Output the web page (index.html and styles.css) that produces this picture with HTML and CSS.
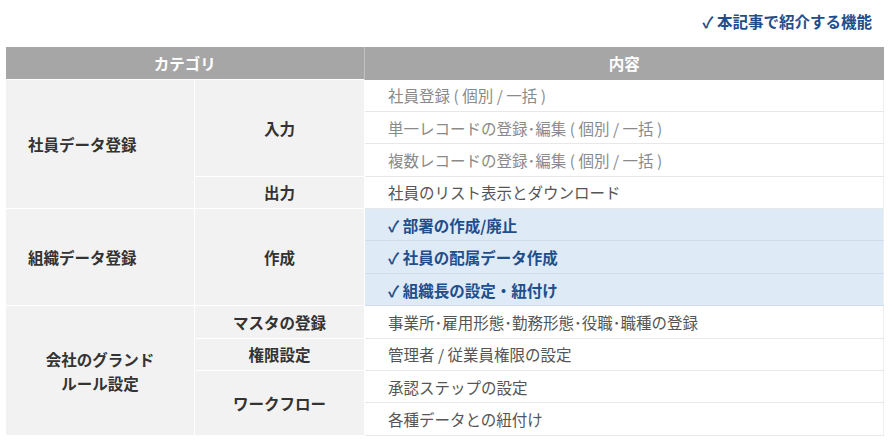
FILE: index.html
```html
<!DOCTYPE html>
<html lang="ja">
<head>
<meta charset="utf-8">
<link rel="stylesheet" href="styles.css">
</head>
<body>
<div class="wrap">
  <p class="legend">✓ 本記事で紹介する機能</p>
  <table class="features">
    <colgroup>
      <col class="c1"><col class="c2"><col class="c3">
    </colgroup>
    <thead>
      <tr><th colspan="2">カテゴリ</th><th>内容</th></tr>
    </thead>
    <tbody>
      <tr>
        <td class="cat cat-left" rowspan="4">社員データ登録</td>
        <td class="cat sub" rowspan="3">入力</td>
        <td class="item light">社員登録 ( 個別 / 一括 )</td>
      </tr>
      <tr><td class="item light">単一レコードの登録･編集 ( 個別 / 一括 )</td></tr>
      <tr><td class="item light">複数レコードの登録･編集 ( 個別 / 一括 )</td></tr>
      <tr>
        <td class="cat sub">出力</td>
        <td class="item">社員のリスト表示とダウンロード</td>
      </tr>
      <tr>
        <td class="cat cat-left" rowspan="3">組織データ登録</td>
        <td class="cat sub" rowspan="3">作成</td>
        <td class="item hl">✓ 部署の作成/廃止</td>
      </tr>
      <tr><td class="item hl">✓ 社員の配属データ作成</td></tr>
      <tr><td class="item hl">✓ 組織長の設定・紐付け</td></tr>
      <tr>
        <td class="cat cat-center" rowspan="4">会社のグランド<br>ルール設定</td>
        <td class="cat sub">マスタの登録</td>
        <td class="item">事業所･雇用形態･勤務形態･役職･職種の登録</td>
      </tr>
      <tr>
        <td class="cat sub">権限設定</td>
        <td class="item">管理者 / 従業員権限の設定</td>
      </tr>
      <tr>
        <td class="cat sub" rowspan="2">ワークフロー</td>
        <td class="item">承認ステップの設定</td>
      </tr>
      <tr><td class="item">各種データとの紐付け</td></tr>
    </tbody>
  </table>
</div>
</body>
</html>
```

FILE: styles.css
```css
html, body {
  margin: 0;
  padding: 0;
  background: #ffffff;
}

body {
  font-family: "Noto Sans CJK JP", "Noto Sans", sans-serif;
  font-size: 15.5px;
  color: #333333;
}

.wrap {
  width: 878px;
  margin-left: 5px;
}

.legend {
  margin: 0 0 15px 0;
  padding: 10px 11px 0 0;
  line-height: 22px;
  text-align: right;
  font-weight: bold;
  color: #1f4e8c;
}

.features {
  width: 878px;
  border-collapse: collapse;
  table-layout: fixed;
}

.c1 { width: 189px; }
.c2 { width: 170px; }
.c3 { width: 519px; }

.features th {
  background: #a6a6a6;
  color: #ffffff;
  font-weight: bold;
  height: 32px;
  padding: 0;
  text-align: center;
  border-right: 1px solid #c2c2c2;
}

.features th:last-child {
  border-right: 0;
}

.features td {
  padding: 0;
  height: 31.4px;
  line-height: 22px;
}

.cat {
  background: #f2f2f2;
  font-weight: bold;
  color: #333333;
  border: 1px solid #ffffff;
}

.cat-left {
  text-align: left;
  padding-left: 22px !important;
}

.cat-center {
  text-align: center;
  line-height: 24px !important;
}

.sub {
  text-align: center;
}

.item {
  padding-left: 23px !important;
  border-bottom: 1px solid #e8e8e8;
  border-right: 1px solid #efefef;
  color: #555555;
  background: #ffffff;
}

.item.light {
  color: #8a8a8a;
}

.item.hl {
  background: #deeaf6;
  color: #1f4e8c;
  font-weight: bold;
  border-bottom: 1px solid #d0dded;
}
```
